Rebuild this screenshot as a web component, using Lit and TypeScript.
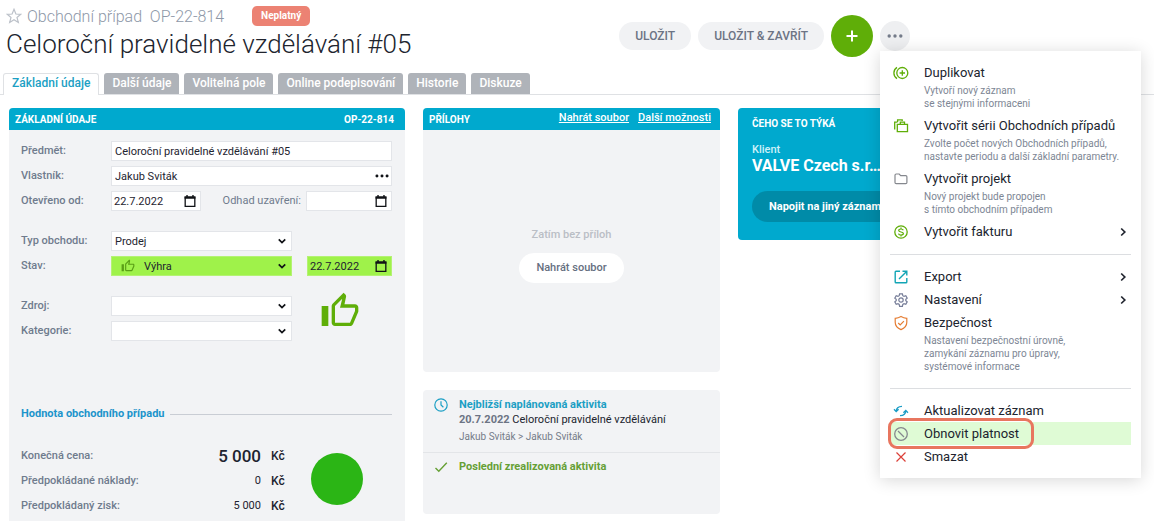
import { LitElement, html, css, svg, nothing, TemplateResult } from "lit";
import { customElement, property } from "lit/decorators.js";

const thumb = svg`<path d="M9 21h9c.83 0 1.54-.5 1.84-1.22l3.02-7.05c.09-.23.14-.47.14-.73v-2c0-1.100-.9-2-2-2h-6.310l.95-4.570.03-.32c0-.41-.17-.79-.44-1.060L14.170 1 7.580 7.590C7.220 7.950 7 8.450 7 9v10c0 1.100.9 2 2 2zM9 9l4.340-4.340L12 10h9v2l-3 7H9V9zM1 9h4v12H1z" fill="currentColor"/>`;

const icons: Record<string, TemplateResult> = {
  duplicate: svg`<g stroke-width="1.300"><circle cx="9.300" cy="8" r="5.500"/><path d="M9.300 5.300v5.400M6.600 8h5.400M4 2.400a6.600 6.600 0 0 0 0 11.200"/></g>`,
  series: svg`<g stroke-width="1.300"><path d="M4.300 6.400h10.200v7.200H4.300zM7.300 6.200V4.200h4.200v2M1.700 11.500V4.200H4.500M4.600 4V1.800h4.600v1.200"/></g>`,
  folder: svg`<path d="M2 4.200c0-.8.4-1.200 1.200-1.200h3l1.500 1.600h5c.8 0 1.200.4 1.200 1.200v5.700c0 .8-.4 1.200-1.200 1.200H3.200c-.8 0-1.200-.4-1.200-1.200z"/>`,
  invoice: svg`<circle cx="8" cy="8" r="6.200" stroke-width="1.300"/><path d="M10.300 6.300C10 5.400 9.200 5 8 5c-1.400 0-2.300.6-2.300 1.500 0 2.100 4.700.9 4.700 3.100C10.400 10.500 9.400 11 8 11s-2.300-.5-2.500-1.400M8 3.500V5M8 11v1.500"/>`,
  export: svg`<path d="M7 2.200H3q-.8 0-.8.8v10q0 .8.8.8h10q.8 0 .8-.8V9M9.500 2.200h4.300v4.300M13.600 2.400 6 10" stroke-width="1.400"/>`,
  settings: svg`<path d="M6.600 1.800h2.800l.4 1.900 1.200.7 1.800-.7 1.400 2.500-1.400 1.200v1.300l1.400 1.200-1.400 2.400-1.800-.6-1.200.7-.4 1.900H6.600l-.4-1.900-1.200-.7-1.800.6-1.400-2.400 1.400-1.200V7.400L1.800 6.200l1.400-2.500 1.800.7 1.200-.7z"/><circle cx="8" cy="8" r="2.200"/>`,
  shield: svg`<path d="M8 1.500c2 1.200 3.800 1.700 5.800 1.900v3.800c0 3.500-2.300 6-5.800 7.400-3.500-1.400-5.800-3.900-5.800-7.400V3.400C4.200 3.200 6 2.700 8 1.500zM5.200 8l2 2 3.700-3.900"/>`,
  refresh: svg`<path d="M3.200 8.400C3.200 5.300 5.200 3.300 9 3.300M12.800 7.600c0 3.100-2 5.100-5.800 5.100M1 6.300l2.200 2.300 2.400-2.300M10.400 9.700l2.400-2.300L15 9.700" stroke-width="1.300"/>`,
  forbid: svg`<circle cx="8" cy="8" r="6.300" stroke-width="1.300"/><path d="m5 5 6 6" stroke-width="1.300"/>`,
  cross: svg`<path d="m3.500 3.500 9 9M12.500 3.500l-9 9"/>`,
  clock: svg`<circle cx="8" cy="8" r="6.200"/><path d="M8 4.300V8l2.400 2.300"/>`,
  check: svg`<path d="m2.500 9 3.300 3.300 8-8.600" stroke-width="1.400"/>`,
  chevronRight: svg`<path d="m6.200 4.500 3.600 3.500-3.600 3.500" stroke-width="1.700"/>`,
  chevronDown: svg`<path d="m4.300 6.200 3.700 3.600 3.700-3.600" stroke-width="2"/>`,
  plus: svg`<path d="M8 2.500v11M2.500 8h11" stroke-width="2"/>`,
  dots: svg`<g fill="currentColor" stroke="none"><circle cx="2.200" cy="8" r="1.700"/><circle cx="8" cy="8" r="1.700"/><circle cx="13.800" cy="8" r="1.700"/></g>`,
  star: svg`<path d="m8 1.300 1.900 4.700 4.900.3-3.800 3.200 1.300 4.900L8 11.700l-4.300 2.700L5 9.500 1.200 6.300l4.900-.3z"/>`,
  calendar: svg`<path d="M2.500 3.500h11v10.700h-11z" stroke-width="1.500"/><path d="M1.800 2.800h12.400v2.700H1.800zM3.800 1.200h1.600V4H3.800zM10.600 1.200h1.600V4h-1.600z" fill="currentColor" stroke="none"/>`,
};

const icon = (name: string, cls = "") => html`<svg
  class="icon ${cls}" viewBox="0 0 16 16" aria-hidden="true"
  fill="none" stroke="currentColor" stroke-width="1.200">${icons[name]}</svg>`;

const base = css`
  * { box-sizing: border-box; }
  :host { font-family: Roboto, sans-serif; }
  button, input, select { font: inherit; color: inherit; margin: 0; }
  button { border: 0; cursor: pointer; }
  .icon { width: 16px; height: 16px; flex: none; display: block; }
`;

@customElement("context-menu")
class ContextMenu extends LitElement {
  static styles = [base, css`
    :host {
      display: block;
      padding: 10px;
      background: #fff;
      box-shadow: 0 2px 16px rgba(0, 0, 0, 0.16);
      color: #20242e;
    }
    .item {
      position: relative;
      display: grid;
      grid-template-columns: 16px 1fr 16px;
      column-gap: 15px;
      align-items: center;
      width: 100%;
      padding: 0 0 0 3px;
      background: none;
      text-align: left;
      font-size: 13px;
      line-height: 23px;
      white-space: nowrap;
    }
    .title { min-width: 0; }
    .note {
      grid-column: 2 / -1;
      padding-bottom: 4px;
      color: #7d8694;
      font-size: 10px;
      line-height: 13px;
      white-space: pre;
    }
    .active { background: #dffbd5; }
    .active::after {
      content: "";
      position: absolute;
      inset: -4px 97px -4px -2px;
      border: 3px solid #e8765f;
      border-radius: 9px;
    }
    hr { margin: 11px 0 10px; border: 0; border-top: 1px solid #dcdee1; }
    .green { color: #5fae08; }
    .gray { color: #85888e; }
    .teal { color: #12a5b5; }
    .slate { color: #767d98; }
    .orange { color: #e57d33; }
    .blue { color: #1b9dc6; }
    .red { color: #dc4038; }
  `];

  item(name: string, color: string, label: string, note = "", more = false, active = false) {
    return html`<button class="item ${active ? "active" : ""}" role="menuitem">
      ${icon(name, color)}<span class="title">${label}</span>${more ? icon("chevronRight") : nothing}
      ${note ? html`<span class="note">${note}</span>` : nothing}
    </button>`;
  }

  render() {
    return html`
      ${this.item("duplicate", "green", "Duplikovat", "Vytvoří nový záznam\nse stejnými informaceni")}
      ${this.item("series", "green", "Vytvořit sérii Obchodních případů", "Zvolte počet nových Obchodních případů,\nnastavte periodu a další základní parametry.")}
      ${this.item("folder", "gray", "Vytvořit projekt", "Nový projekt bude propojen\ns tímto obchodním případem")}
      ${this.item("invoice", "green", "Vytvořit fakturu", "", true)}
      <hr>
      ${this.item("export", "teal", "Export", "", true)}
      ${this.item("settings", "slate", "Nastavení", "", true)}
      ${this.item("shield", "orange", "Bezpečnost", "Nastavení bezpečnostní úrovně,\nzamykání záznamu pro úpravy,\nsystémové informace")}
      <hr>
      ${this.item("refresh", "blue", "Aktualizovat záznam")}
      ${this.item("forbid", "gray", "Obnovit platnost", "", false, true)}
      ${this.item("cross", "red", "Smazat")}
    `;
  }
}

@customElement("deal-form")
class DealForm extends LitElement {
  static styles = [base, css`
    :host {
      display: block;
      padding: 11px 13px 4px 12px;
      font-size: 11px;
      color: #1e2430;
    }
    .rows {
      display: grid;
      grid-template-columns: 90px 181px 1fr;
      row-gap: 5px;
      margin-bottom: 20px;
    }
    label, .name { color: #6f7b8d; font-weight: 500; line-height: 20px; }
    .wide { grid-column: 2 / -1; }
    .field {
      display: grid;
      align-items: center;
      height: 20px;
      background: #fff;
      border: 1px solid #e3e5e9;
    }
    .field > * { grid-area: 1 / 1; }
    .field > .icon { justify-self: end; width: 14px; height: 14px; margin-right: 2px; color: #101216; pointer-events: none; }
    .field > .calendar { margin-right: 3px; }
    .field > .lead { justify-self: start; margin-left: 9px; color: #5a9f16; }
    input, select {
      appearance: none;
      width: 100%;
      min-width: 0;
      height: 18px;
      padding: 0 3px;
      border: 0;
      border-radius: 0;
      background: transparent;
      outline: none;
    }
    .won { background: #9ff24a; border-color: #b4f273; }
    .won select { padding-left: 32px; }
    .dates {
      grid-column: 2 / -1;
      display: grid;
      grid-template-columns: 90px 1fr 86px;
      column-gap: 5px;
    }
    .dates label { text-align: right; font-weight: 400; }
    .side { margin-left: 15px; }
    .side input, .dates input { padding-left: 2px; }
    .thumb { grid-area: 1 / 3 / 3 / 4; width: 40px; height: 40px; margin: -5px 0 0 28px; color: #5fae08; }
    h2 {
      display: flex;
      align-items: center;
      gap: 5px;
      margin: 65px 0 24px;
      color: #1c94cb;
      font-size: 11px;
      font-weight: 700;
      line-height: 16px;
    }
    h2::after { content: ""; flex: 1; border-top: 1px solid #c9cdd4; }
    .totals { display: flex; }
    .prices { display: grid; grid-template-columns: 140px 100px 1fr; row-gap: 5px; line-height: 20px; flex: none; width: 264px; margin: 0; }
    .amount { text-align: right; }
    .total { font-size: 17px; font-weight: 500; }
    .unit { padding-left: 10px; font-size: 12px; font-weight: 500; }
    .disc { width: 52px; height: 52px; margin: 7px 0 0 26px; border-radius: 50%; background: #2bb515; }
  `];

  render() {
    return html`
      <div class="rows">
        <label for="subject">Předmět:</label>
        <div class="field wide"><input id="subject" value="Celoroční pravidelné vzdělávání #05"></div>
        <label for="owner">Vlastník:</label>
        <div class="field wide"><input id="owner" value="Jakub Sviták">${icon("dots")}</div>
        <label for="opened">Otevřeno od:</label>
        <div class="dates">
          <div class="field"><input id="opened" value="22.7.2022">${icon("calendar", "calendar")}</div>
          <label for="closing">Odhad uzavření:</label>
          <div class="field"><input id="closing">${icon("calendar", "calendar")}</div>
        </div>
      </div>
      <div class="rows">
        <label for="type">Typ obchodu:</label>
        <div class="field"><select id="type"><option>Prodej</option></select>${icon("chevronDown")}</div>
        <span></span>
        <label for="state">Stav:</label>
        <div class="field won">
          <select id="state"><option>Výhra</option></select>
          <svg class="icon lead" viewBox="0 0 24 24" aria-hidden="true">${thumb}</svg>
          ${icon("chevronDown")}
        </div>
        <div class="field won side">
          <input aria-label="Datum stavu" value="22.7.2022">${icon("calendar", "calendar")}
        </div>
      </div>
      <div class="rows">
        <label for="source">Zdroj:</label>
        <div class="field"><select id="source"><option></option></select>${icon("chevronDown")}</div>
        <svg class="thumb" viewBox="0 0 24 24" aria-hidden="true">${thumb}</svg>
        <label for="category">Kategorie:</label>
        <div class="field"><select id="category"><option></option></select>${icon("chevronDown")}</div>
      </div>
      <h2>Hodnota obchodního případu</h2>
      <div class="totals">
        <div class="prices">
          <span class="name">Konečná cena:</span><span class="amount total">5 000</span><span class="unit">Kč</span>
          <span class="name">Předpokládané náklady:</span><span class="amount">0</span><span class="unit">Kč</span>
          <span class="name">Předpokládaný zisk:</span><span class="amount">5 000</span><span class="unit">Kč</span>
        </div>
        <div class="disc"></div>
      </div>
    `;
  }
}

@customElement("app-root")
class AppRoot extends LitElement {
  @property({ attribute: false }) tabs = [
    "Základní údaje", "Další údaje", "Volitelná pole", "Online podepisování", "Historie", "Diskuze",
  ];

  static styles = [base, css`
    :host {
      position: relative;
      display: flex;
      flex-direction: column;
      min-height: 100vh;
      background: #fff;
      color: #20242e;
      font-size: 11px;
    }
    header {
      display: flex;
      justify-content: space-between;
      align-items: flex-start;
      padding: 6px 244px 0 6px;
    }
    .crumb { display: flex; align-items: center; gap: 5px; height: 20px; color: #8e98a8; font-size: 16px; font-weight: 300; }
    .crumb .icon { color: #bcc1c9; }
    .badge { margin-left: 23px; padding: 0 9px; border-radius: 5px; background: #ec8273; color: #fff; font-size: 10px; font-weight: 700; line-height: 20px; }
    h1 { margin: 0; font-size: 26px; font-weight: 300; line-height: 36px; }
    .actions { display: flex; align-items: center; gap: 7px; padding-top: 9px; }
    .pill { height: 28px; padding: 0 16px; border-radius: 15px; background: #f1f2f4; color: #6c7484; font-size: 12px; font-weight: 500; }
    .round { display: grid; place-items: center; width: 30px; height: 30px; padding: 0; border-radius: 50%; background: #eeeff1; color: #747b89; }
    .add { width: 42px; height: 42px; background: #5fae08; color: #fff; }
    .tabs { display: flex; gap: 5px; margin-top: 11px; padding-left: 3px; border-bottom: 1px solid #dfe1e4; }
    .tab { height: 21px; padding: 0 8px; border-radius: 3px 3px 0 0; background: #afb3b9; color: #fff; font-size: 12px; font-weight: 500; line-height: 20px; text-decoration: none; }
    .selected { height: 22px; margin-bottom: -1px; border: 1px solid #dfe1e4; border-bottom: 0; background: #fff; color: #1c9fc4; line-height: 18px; }
    main {
      flex: 1;
      display: grid;
      grid-template-columns: minmax(0, 4fr) minmax(0, 3fr) minmax(0, 4fr);
      gap: 18px;
      padding: 13px 20px 0 9px;
    }
    .column { display: flex; flex-direction: column; gap: 18px; }
    .card { border-radius: 4px; overflow: hidden; background: #f2f3f5; }
    .main-card { border-radius: 4px 4px 0 0; }
    .bar { display: flex; align-items: center; height: 22px; padding: 0 9px 0 6px; background: #00a9ce; color: #fff; font-weight: 700; font-size: 10px; }
    .bar h2 { flex: 1; margin: 0; font: inherit; }
    .bar span { margin-right: 2px; }
    .bar a { margin-left: 9px; color: inherit; font-size: 11px; font-weight: 500; line-height: 20px; align-self: flex-start; }
    .empty { display: flex; flex-direction: column; align-items: center; gap: 10px; padding: 97px 0 89px; color: #babec5; font-weight: 500; line-height: 16px; }
    .upload { height: 30px; padding: 0 17px; border-radius: 15px; background: #fff; color: #666f7f; font-weight: 500; }
    .activity { display: grid; grid-template-columns: 16px 1fr; grid-template-rows: 15px; column-gap: 10px; padding: 7px 10px 8px; line-height: 15px; }
    .activity + .activity { padding-top: 6px; padding-bottom: 40px; border-top: 1px solid #e3e5e8; }
    .activity h3 { margin: 0; font-size: 11px; font-weight: 700; }
    .activity p { grid-column: 2; margin: 0; }
    .activity b { color: #6c7484; }
    .activity .people { padding-top: 2px; color: #757c89; font-size: 10px; }
    .next { color: #1c9fc4; }
    .done { color: #66a035; }
    .related { align-self: start; padding: 8px 14px 18px; background: #00a9ce; color: #fff; line-height: 16px; }
    .related h2 { margin: 0 0 10px; font-size: 10px; font-weight: 700; }
    .related small { display: block; font-size: 11px; font-weight: 500; color: #cdf1f9; }
    .related strong { display: block; font-size: 16px; font-weight: 700; }
    .link { display: block; width: 100%; height: 31px; margin-top: 17px; padding: 0 17px; border-radius: 16px; background: #008ba8; font-size: 11px; font-weight: 700; text-align: left; }
    context-menu { position: absolute; top: 51px; right: 13px; width: 261px; }
  `];

  render() {
    return html`
      <header>
        <div>
          <div class="crumb">${icon("star")}<span>Obchodní případ&nbsp; OP-22-814</span><span class="badge">Neplatný</span></div>
          <h1>Celoroční pravidelné vzdělávání #05</h1>
        </div>
        <div class="actions">
          <button class="pill">ULOŽIT</button>
          <button class="pill">ULOŽIT &amp; ZAVŘÍT</button>
          <button class="round add" aria-label="Přidat">${icon("plus")}</button>
          <button class="round" aria-label="Další akce">${icon("dots")}</button>
        </div>
      </header>
      <nav class="tabs">
        ${this.tabs.map((t, i) => html`<a href="#" class="tab ${i === 0 ? "selected" : ""}">${t}</a>`)}
      </nav>
      <main>
        <section class="card main-card">
          <div class="bar"><h2>ZÁKLADNÍ ÚDAJE</h2><span>OP-22-814</span></div>
          <deal-form></deal-form>
        </section>
        <div class="column">
          <section class="card">
            <div class="bar"><h2>PŘÍLOHY</h2><a href="#">Nahrát soubor</a><a href="#">Další možnosti</a></div>
            <div class="empty"><span>Zatím bez příloh</span><button class="upload">Nahrát soubor</button></div>
          </section>
          <section class="card">
            <div class="activity">
              ${icon("clock", "next")}<h3 class="next">Nejbližší naplánovaná aktivita</h3>
              <p><b>20.7.2022</b> Celoroční pravidelné vzdělávání</p>
              <p class="people">Jakub Sviták &gt; Jakub Sviták</p>
            </div>
            <div class="activity">${icon("check", "done")}<h3 class="done">Poslední zrealizovaná aktivita</h3></div>
          </section>
        </div>
        <section class="card related">
          <h2>ČEHO SE TO TÝKÁ</h2>
          <small>Klient</small>
          <strong>VALVE Czech s.r…</strong>
          <button class="link">Napojit na jiný záznam</button>
        </section>
      </main>
      <context-menu role="menu"></context-menu>
    `;
  }
}
